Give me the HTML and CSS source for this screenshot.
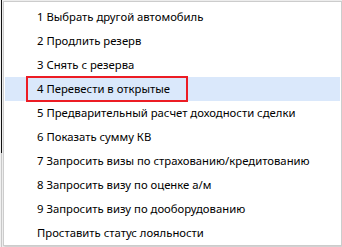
FILE: index.html
```html
<!DOCTYPE html>
<html lang="ru">
<head>
<meta charset="utf-8">
<link rel="stylesheet" href="styles.css">
</head>
<body>
<div class="screen">
  <div class="backdrop">
    <div class="frame-edge"></div>
    <div class="frame-lower"></div>
  </div>
  <ul class="menu">
    <li class="item">1 Выбрать другой автомобиль</li>
    <li class="item">2 Продлить резерв</li>
    <li class="item">3 Снять с резерва</li>
    <li class="item item-hover">4 Перевести в открытые<span class="mark"></span></li>
    <li class="item">5 Предварительный расчет доходности сделки</li>
    <li class="item">6 Показать сумму КВ</li>
    <li class="item">7 Запросить визы по страхованию/кредитованию</li>
    <li class="item">8 Запросить визу по оценке а/м</li>
    <li class="item">9 Запросить визу по дооборудованию</li>
    <li class="item">Проставить статус лояльности</li>
  </ul>
</div>
</body>
</html>
```

FILE: styles.css
```css
html, body {
  margin: 0;
  padding: 0;
}

body {
  background: #f0f0f0;
  font-family: "Noto Sans", "Open Sans", sans-serif;
}

.screen {
  position: relative;
  width: 342px;
  height: 247px;
  overflow: hidden;
  background: #f0f0f0;
}

.backdrop {
  display: flex;
  flex-direction: column;
  padding-left: 1px;
}

.frame-edge {
  width: 1px;
  height: 153px;
  background: #111;
}

.frame-lower {
  width: 1px;
  height: 94px;
  background: #c8c8c8;
}

.menu {
  position: absolute;
  left: 3px;
  top: 1px;
  width: 335px;
  margin: 0;
  padding: 3px 1px 0 1px;
  list-style: none;
  background: #ffffff;
  border: 1px solid #cccccc;
  box-shadow: 1px 1px 2px rgba(0, 0, 0, 0.18);
}

.item {
  position: relative;
  height: 24px;
  line-height: 24px;
  padding-left: 32px;
  font-size: 11.3px;
  color: #000;
  white-space: nowrap;
}

.item-hover {
  background: #dae8fb;
}

.mark {
  position: absolute;
  left: 21px;
  top: -1px;
  width: 158px;
  height: 22px;
  border: 2px solid #ec1c24;
}
```
